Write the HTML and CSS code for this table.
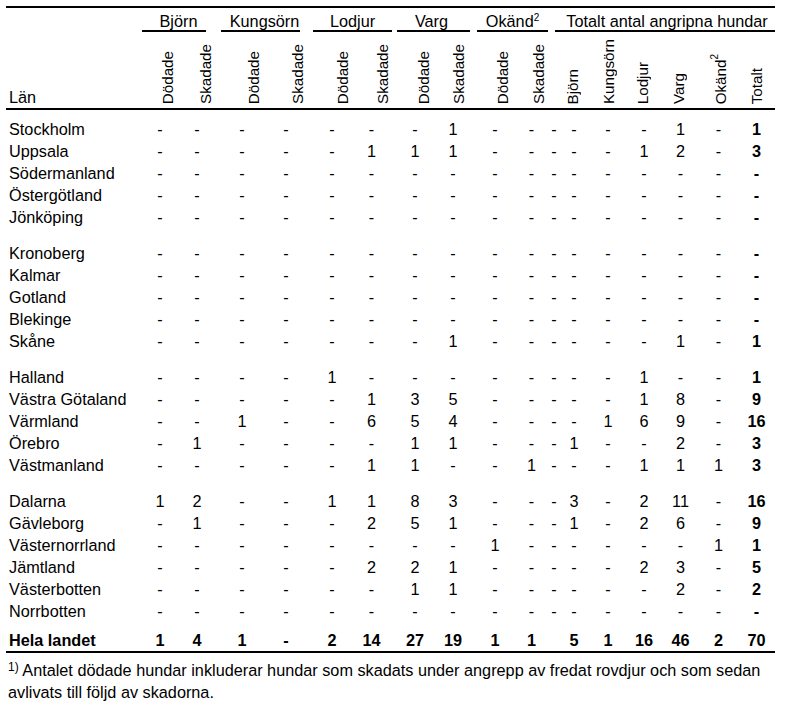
FILE: index.html
```html
<!DOCTYPE html>
<html lang="sv">
<head>
<meta charset="utf-8">
<title>Angripna hundar per län</title>
<link rel="stylesheet" href="styles.css">
</head>
<body>
<div class="page">
<table class="stats">
<colgroup>
<col><col><col><col><col><col><col><col><col><col><col><col><col><col><col><col><col><col>
</colgroup>
<thead>
<tr class="top">
<th class="lan" rowspan="2">Län</th>
<th class="grp" colspan="2"><div class="g-bj">Björn</div></th>
<th class="grp" colspan="2"><div class="g-ku">Kungsörn</div></th>
<th class="grp" colspan="2"><div class="g-lo">Lodjur</div></th>
<th class="grp" colspan="2"><div class="g-va">Varg</div></th>
<th class="grp" colspan="2"><div class="g-ok">Okänd<sup>2</sup></div></th>
<th class="grp" colspan="7"><div class="g-tot">Totalt antal angripna hundar</div></th>
</tr>
<tr class="sub">
<th><div class="vh"><span class="vt">Dödade</span></div></th>
<th><div class="vh"><span class="vt">Skadade</span></div></th>
<th><div class="vh"><span class="vt">Dödade</span></div></th>
<th><div class="vh"><span class="vt">Skadade</span></div></th>
<th><div class="vh"><span class="vt">Dödade</span></div></th>
<th><div class="vh"><span class="vt">Skadade</span></div></th>
<th><div class="vh"><span class="vt">Dödade</span></div></th>
<th><div class="vh"><span class="vt">Skadade</span></div></th>
<th><div class="vh"><span class="vt">Dödade</span></div></th>
<th><div class="vh"><span class="vt">Skadade</span></div></th>
<th><div class="vh"></div></th>
<th><div class="vh"><span class="vt">Björn</span></div></th>
<th><div class="vh"><span class="vt">Kungsörn</span></div></th>
<th><div class="vh"><span class="vt">Lodjur</span></div></th>
<th><div class="vh"><span class="vt">Varg</span></div></th>
<th><div class="vh"><span class="vt">Okänd<sup>2</sup></span></div></th>
<th><div class="vh"><span class="vt">Totalt</span></div></th>
</tr>
</thead>
<tbody>
<tr class="gs1"><td>Stockholm</td><td>-</td><td>-</td><td>-</td><td>-</td><td>-</td><td>-</td><td>-</td><td>1</td><td>-</td><td>-</td><td>-</td><td>-</td><td>-</td><td>-</td><td>1</td><td>-</td><td>1</td></tr>
<tr><td>Uppsala</td><td>-</td><td>-</td><td>-</td><td>-</td><td>-</td><td>1</td><td>1</td><td>1</td><td>-</td><td>-</td><td>-</td><td>-</td><td>-</td><td>1</td><td>2</td><td>-</td><td>3</td></tr>
<tr><td>Södermanland</td><td>-</td><td>-</td><td>-</td><td>-</td><td>-</td><td>-</td><td>-</td><td>-</td><td>-</td><td>-</td><td>-</td><td>-</td><td>-</td><td>-</td><td>-</td><td>-</td><td>-</td></tr>
<tr><td>Östergötland</td><td>-</td><td>-</td><td>-</td><td>-</td><td>-</td><td>-</td><td>-</td><td>-</td><td>-</td><td>-</td><td>-</td><td>-</td><td>-</td><td>-</td><td>-</td><td>-</td><td>-</td></tr>
<tr><td>Jönköping</td><td>-</td><td>-</td><td>-</td><td>-</td><td>-</td><td>-</td><td>-</td><td>-</td><td>-</td><td>-</td><td>-</td><td>-</td><td>-</td><td>-</td><td>-</td><td>-</td><td>-</td></tr>

<tr class="gs"><td>Kronoberg</td><td>-</td><td>-</td><td>-</td><td>-</td><td>-</td><td>-</td><td>-</td><td>-</td><td>-</td><td>-</td><td>-</td><td>-</td><td>-</td><td>-</td><td>-</td><td>-</td><td>-</td></tr>
<tr><td>Kalmar</td><td>-</td><td>-</td><td>-</td><td>-</td><td>-</td><td>-</td><td>-</td><td>-</td><td>-</td><td>-</td><td>-</td><td>-</td><td>-</td><td>-</td><td>-</td><td>-</td><td>-</td></tr>
<tr><td>Gotland</td><td>-</td><td>-</td><td>-</td><td>-</td><td>-</td><td>-</td><td>-</td><td>-</td><td>-</td><td>-</td><td>-</td><td>-</td><td>-</td><td>-</td><td>-</td><td>-</td><td>-</td></tr>
<tr><td>Blekinge</td><td>-</td><td>-</td><td>-</td><td>-</td><td>-</td><td>-</td><td>-</td><td>-</td><td>-</td><td>-</td><td>-</td><td>-</td><td>-</td><td>-</td><td>-</td><td>-</td><td>-</td></tr>
<tr><td>Skåne</td><td>-</td><td>-</td><td>-</td><td>-</td><td>-</td><td>-</td><td>-</td><td>1</td><td>-</td><td>-</td><td>-</td><td>-</td><td>-</td><td>-</td><td>1</td><td>-</td><td>1</td></tr>

<tr class="gs"><td>Halland</td><td>-</td><td>-</td><td>-</td><td>-</td><td>1</td><td>-</td><td>-</td><td>-</td><td>-</td><td>-</td><td>-</td><td>-</td><td>-</td><td>1</td><td>-</td><td>-</td><td>1</td></tr>
<tr><td>Västra Götaland</td><td>-</td><td>-</td><td>-</td><td>-</td><td>-</td><td>1</td><td>3</td><td>5</td><td>-</td><td>-</td><td>-</td><td>-</td><td>-</td><td>1</td><td>8</td><td>-</td><td>9</td></tr>
<tr><td>Värmland</td><td>-</td><td>-</td><td>1</td><td>-</td><td>-</td><td>6</td><td>5</td><td>4</td><td>-</td><td>-</td><td>-</td><td>-</td><td>1</td><td>6</td><td>9</td><td>-</td><td>16</td></tr>
<tr><td>Örebro</td><td>-</td><td>1</td><td>-</td><td>-</td><td>-</td><td>-</td><td>1</td><td>1</td><td>-</td><td>-</td><td>-</td><td>1</td><td>-</td><td>-</td><td>2</td><td>-</td><td>3</td></tr>
<tr><td>Västmanland</td><td>-</td><td>-</td><td>-</td><td>-</td><td>-</td><td>1</td><td>1</td><td>-</td><td>-</td><td>1</td><td>-</td><td>-</td><td>-</td><td>1</td><td>1</td><td>1</td><td>3</td></tr>

<tr class="gs"><td>Dalarna</td><td>1</td><td>2</td><td>-</td><td>-</td><td>1</td><td>1</td><td>8</td><td>3</td><td>-</td><td>-</td><td>-</td><td>3</td><td>-</td><td>2</td><td>11</td><td>-</td><td>16</td></tr>
<tr><td>Gävleborg</td><td>-</td><td>1</td><td>-</td><td>-</td><td>-</td><td>2</td><td>5</td><td>1</td><td>-</td><td>-</td><td>-</td><td>1</td><td>-</td><td>2</td><td>6</td><td>-</td><td>9</td></tr>
<tr><td>Västernorrland</td><td>-</td><td>-</td><td>-</td><td>-</td><td>-</td><td>-</td><td>-</td><td>-</td><td>1</td><td>-</td><td>-</td><td>-</td><td>-</td><td>-</td><td>-</td><td>1</td><td>1</td></tr>
<tr><td>Jämtland</td><td>-</td><td>-</td><td>-</td><td>-</td><td>-</td><td>2</td><td>2</td><td>1</td><td>-</td><td>-</td><td>-</td><td>-</td><td>-</td><td>2</td><td>3</td><td>-</td><td>5</td></tr>
<tr><td>Västerbotten</td><td>-</td><td>-</td><td>-</td><td>-</td><td>-</td><td>-</td><td>1</td><td>1</td><td>-</td><td>-</td><td>-</td><td>-</td><td>-</td><td>-</td><td>2</td><td>-</td><td>2</td></tr>
<tr><td>Norrbotten</td><td>-</td><td>-</td><td>-</td><td>-</td><td>-</td><td>-</td><td>-</td><td>-</td><td>-</td><td>-</td><td>-</td><td>-</td><td>-</td><td>-</td><td>-</td><td>-</td><td>-</td></tr>

<tr class="total"><td>Hela landet</td><td>1</td><td>4</td><td>1</td><td>-</td><td>2</td><td>14</td><td>27</td><td>19</td><td>1</td><td>1</td><td></td><td>5</td><td>1</td><td>16</td><td>46</td><td>2</td><td>70</td></tr>
</tbody>
</table>
<p class="note"><sup>1)</sup> Antalet dödade hundar inkluderar hundar som skadats under angrepp av fredat rovdjur och som sedan avlivats till följd av skadorna.</p>
</div>
</body>
</html>
```
FILE: styles.css
```css
body {
  margin: 0;
  background: #fff;
  color: #000;
  font-family: "Liberation Sans", Arial, sans-serif;
  font-size: 16px;
}

.page {
  padding: 6px 0 0 6px;
}

.stats {
  border-collapse: separate;
  border-spacing: 0;
  table-layout: fixed;
  width: 769px;
  font-size: 16.25px;
}

/* column widths */
.stats col:nth-child(1) { width: 136px; }
.stats col:nth-child(2) { width: 36px; }
.stats col:nth-child(3) { width: 42px; }
.stats col:nth-child(4) { width: 44px; }
.stats col:nth-child(5) { width: 44px; }
.stats col:nth-child(6) { width: 43px; }
.stats col:nth-child(7) { width: 41px; }
.stats col:nth-child(8) { width: 41px; }
.stats col:nth-child(9) { width: 40px; }
.stats col:nth-child(10) { width: 40px; }
.stats col:nth-child(11) { width: 37px; }
.stats col:nth-child(12) { width: 8px; }
.stats col:nth-child(13) { width: 32px; }
.stats col:nth-child(14) { width: 36px; }
.stats col:nth-child(15) { width: 36px; }
.stats col:nth-child(16) { width: 37px; }
.stats col:nth-child(17) { width: 39px; }
.stats col:nth-child(18) { width: 37px; }

/* header */
.stats th {
  font-weight: normal;
  padding: 0;
}

.top th {
  border-top: 2px solid #000;
  vertical-align: top;
  padding-top: 4px;
}

.top th.lan {
  text-align: left;
  vertical-align: bottom;
  padding: 0 0 2px 3px;
  line-height: 18px;
  border-bottom: 2px solid #000;
}

.grp div {
  line-height: 18px;
  border-bottom: 2px solid #000;
  text-align: center;
  white-space: nowrap;
}

.grp sup,
.vt sup {
  font-size: 10px;
  line-height: 0;
}

.g-bj { margin: 0 14px 0 0; padding-left: 9px; }
.g-ku { margin: 0 8px 0 1px; padding-left: 8px; }
.g-lo { margin: 0 0 0 5px; }
.g-va { margin: 0 3px 0 5px; padding-right: 4px; }
.g-ok { margin: 0 2px 0 4px; }
.g-tot { margin: 0 0 0 5px; padding-left: 4px; }

.sub th {
  vertical-align: bottom;
  padding: 0 0 4px;
  border-bottom: 2px solid #000;
}

.vh {
  height: 72px;
  display: flex;
  justify-content: center;
  align-items: flex-end;
}

.vt {
  writing-mode: vertical-rl;
  transform: rotate(180deg);
  font-size: 15.2px;
  line-height: 17px;
  white-space: nowrap;
}

.sub th:nth-child(1) { padding-left: 14px; }
.sub th:nth-child(2) { padding-left: 12px; }
.sub th:nth-child(3) { padding-left: 22px; }
.sub th:nth-child(4) { padding-left: 22px; }
.sub th:nth-child(5) { padding-left: 25px; }
.sub th:nth-child(6) { padding-left: 21px; }
.sub th:nth-child(7) { padding-left: 21px; }
.sub th:nth-child(8) { padding-left: 10px; }
.sub th:nth-child(9) { padding-left: 18px; }
.sub th:nth-child(10) { padding-left: 13px; }
.sub th:nth-child(12) { padding-right: 4px; }
.sub th:nth-child(14) { padding-right: 4px; }
.sub th:nth-child(15) { padding-right: 5px; }
.sub th:nth-child(16) { padding-left: 3px; }

/* body */
.stats td {
  padding: 0;
  line-height: 22px;
  text-align: center;
  white-space: nowrap;
}

.stats td:first-child {
  text-align: left;
  padding-left: 3px;
}

.stats td:last-child {
  font-weight: bold;
}

.stats td:nth-child(3) { padding-right: 4px; }
.stats td:nth-child(6) { padding-left: 5px; }
.stats td:nth-child(8) { padding-left: 5px; }
.stats td:nth-child(10) { padding-left: 4px; }

.gs1 td { padding-top: 8px; }
.gs td { padding-top: 14px; }

.total td {
  font-weight: bold;
  padding-top: 8px;
  line-height: 21px;
  border-bottom: 2px solid #000;
}

/* footnote */
.note {
  margin: 0;
  padding: 6px 0 0 2px;
  width: 767px;
  line-height: 22px;
  font-size: 16.25px;
}

.note sup {
  font-size: 12px;
  line-height: 0;
  vertical-align: 5px;
}
```
